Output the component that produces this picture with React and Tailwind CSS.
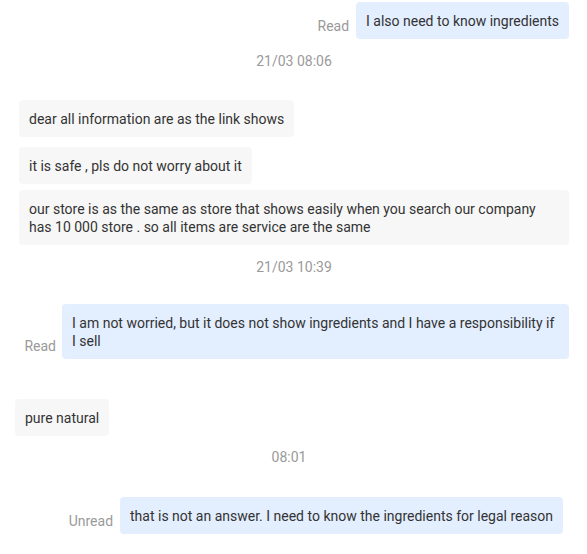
export default function App() {
  const grey = "rounded-[4px] bg-[#f7f7f7] px-[10px] py-[9.5px] leading-[18px]";
  const blue = "rounded-[4px] bg-[#e3eeff] px-[10px] py-[9.5px] leading-[18px]";
  const status = "mb-[4px] shrink-0 leading-[18px] text-[#9a9a9a]";
  const stamp = "w-full text-center leading-[18px] text-[#9a9a9a]";

  return (
    <div className="h-[554px] w-[587px] overflow-hidden bg-white font-['Roboto',sans-serif] text-[14px] text-[#333]">
      <div className="flex flex-col items-start pl-[19px] pr-[18px] pt-[2px]">
        <div className="flex w-full items-end justify-end gap-[7px]">
          <span className={status}>Read</span>
          <div className={blue}>I also need to know ingredients</div>
        </div>

        <div className={"mt-[13px] " + stamp}>21/03 08:06</div>

        <div className={"mt-[30px] " + grey}>dear all information are as the link shows</div>
        <div className={"mt-[10px] " + grey}>it is safe , pls do not worry about it</div>
        <div className={"mt-[6px] w-full " + grey}>
          our store is as the same as store that shows easily when you search our company has 10 000 store . so all items are service are the same
        </div>

        <div className={"mt-[13px] " + stamp}>21/03 10:39</div>

        <div className="mt-[28px] flex w-full items-end justify-end gap-[6px]">
          <span className={status}>Read</span>
          <div className={"w-[507px] " + blue}>
            I am not worried, but it does not show ingredients and I have a responsibility if
            <br />
            I sell
          </div>
        </div>
      </div>

      <div className="flex flex-col items-start pl-[15px] pr-[24px]">
        <div className={"mt-[40px] " + grey}>pure natural</div>

        <div className={"mt-[12px] " + stamp}>08:01</div>

        <div className="mt-[31px] flex w-full items-end justify-end gap-[7px]">
          <span className={status}>Unread</span>
          <div className={blue}>that is not an answer. I need to know the ingredients for legal reason</div>
        </div>
      </div>
    </div>
  );
}
